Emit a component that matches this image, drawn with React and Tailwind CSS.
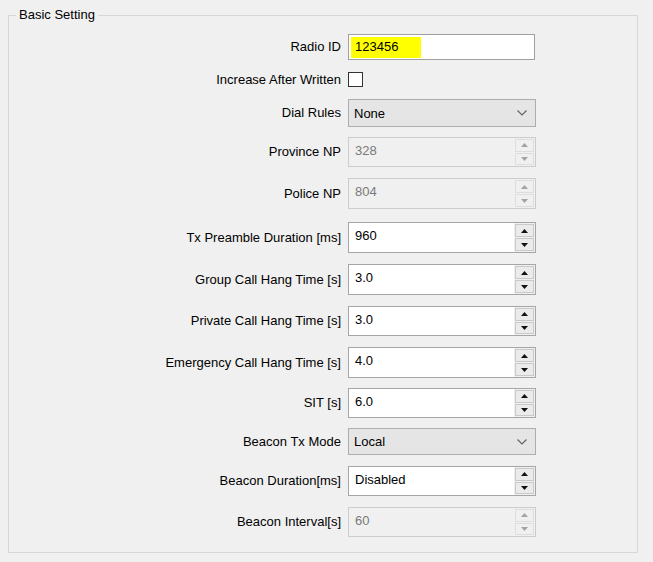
import React from "react";

const font = { fontFamily: '"Liberation Sans", Arial, sans-serif' };

function Arrow({ up, disabled }) {
  return (
    <svg width="7" height="4" viewBox="0 0 7 4" className="block">
      <polygon
        points={up ? "0,4 7,4 3.5,0" : "0,0 7,0 3.5,4"}
        fill={disabled ? "#a3a3a3" : "#111111"}
      />
    </svg>
  );
}

function Spin({ value, disabled }) {
  return (
    <div
      className={`flex h-full w-[188px] border ${
        disabled ? "border-[#cccccc] bg-[#f0f0f0]" : "border-[#a6a6a6] bg-white"
      }`}
    >
      <div className={`flex-1 pl-[6px] pt-[5px] leading-[15px] ${disabled ? "text-[#7a7a7a]" : "text-black"}`}>
        {value}
      </div>
      <div className="flex w-[21px] flex-col gap-[1px] bg-[#f0f0f0] p-[1px]">
        <div
          className={`flex flex-1 items-center justify-center border ${
            disabled ? "border-[#dedede] bg-[#f0f0f0]" : "border-[#c9c9c9] bg-[#ebebeb]"
          }`}
        >
          <Arrow up disabled={disabled} />
        </div>
        <div
          className={`flex flex-1 items-center justify-center border ${
            disabled ? "border-[#dedede] bg-[#f0f0f0]" : "border-[#c9c9c9] bg-[#ebebeb]"
          }`}
        >
          <Arrow disabled={disabled} />
        </div>
      </div>
    </div>
  );
}

function Combo({ value }) {
  return (
    <div className="flex h-full w-[188px] items-center justify-between border border-[#adadad] bg-[#e5e5e5] pl-[5px] pr-[8px]">
      <span className="pt-[1px]">{value}</span>
      <svg width="10" height="6" viewBox="0 0 10 6">
        <polyline points="0.5,0.5 5,5 9.5,0.5" fill="none" stroke="#606060" strokeWidth="1.1" />
      </svg>
    </div>
  );
}

function Row({ label, className, children }) {
  return (
    <div className={`flex items-center ${className}`}>
      <div className="w-[333px] pr-[1px] text-right text-black">{label}</div>
      <div className="ml-[6px] flex h-full items-center">{children}</div>
    </div>
  );
}

export default function App() {
  return (
    <div className="h-[562px] w-[653px] bg-[#f0f0f0] pt-[8px] text-[13px]" style={font}>
      <fieldset className="ml-[8px] h-[545px] w-[630px] border border-[#d7d7d7] px-0">
        <legend className="ml-[7px] px-[3px] leading-[14px] text-black">Basic Setting</legend>

        <Row label="Radio ID" className="mt-[12px] h-[26px]">
          <div className="flex h-full w-[187px] items-center border border-[#a0a0a0] bg-white pl-[2px]">
            <span className="flex h-[21px] w-[70px] items-center bg-[#ffff00] pl-[4px]">123456</span>
          </div>
        </Row>

        <Row label="Increase After Written" className="mt-[12px] h-[15px]">
          <div className="h-[15px] w-[15px] border border-[#333333] bg-white" />
        </Row>

        <Row label="Dial Rules" className="mt-[12px] h-[28px]">
          <Combo value="None" />
        </Row>

        <Row label="Province NP" className="mt-[10px] h-[30px]">
          <Spin value="328" disabled />
        </Row>

        <Row label="Police NP" className="mt-[11px] h-[31px]">
          <Spin value="804" disabled />
        </Row>

        <Row label="Tx Preamble Duration [ms]" className="mt-[13px] h-[31px]">
          <Spin value="960" />
        </Row>

        <Row label="Group Call Hang Time [s]" className="mt-[11px] h-[31px]">
          <Spin value="3.0" />
        </Row>

        <Row label="Private Call Hang Time [s]" className="mt-[11px] h-[30px]">
          <Spin value="3.0" />
        </Row>

        <Row label="Emergency Call Hang Time [s]" className="mt-[11px] h-[31px]">
          <Spin value="4.0" />
        </Row>

        <Row label="SIT [s]" className="mt-[10px] h-[30px]">
          <Spin value="6.0" />
        </Row>

        <Row label="Beacon Tx Mode" className="mt-[10px] h-[27px]">
          <Combo value="Local" />
        </Row>

        <Row label="Beacon Duration[ms]" className="mt-[11px] h-[30px]">
          <Spin value="Disabled" />
        </Row>

        <Row label="Beacon Interval[s]" className="mt-[11px] h-[30px]">
          <Spin value="60" disabled />
        </Row>
      </fieldset>
    </div>
  );
}
